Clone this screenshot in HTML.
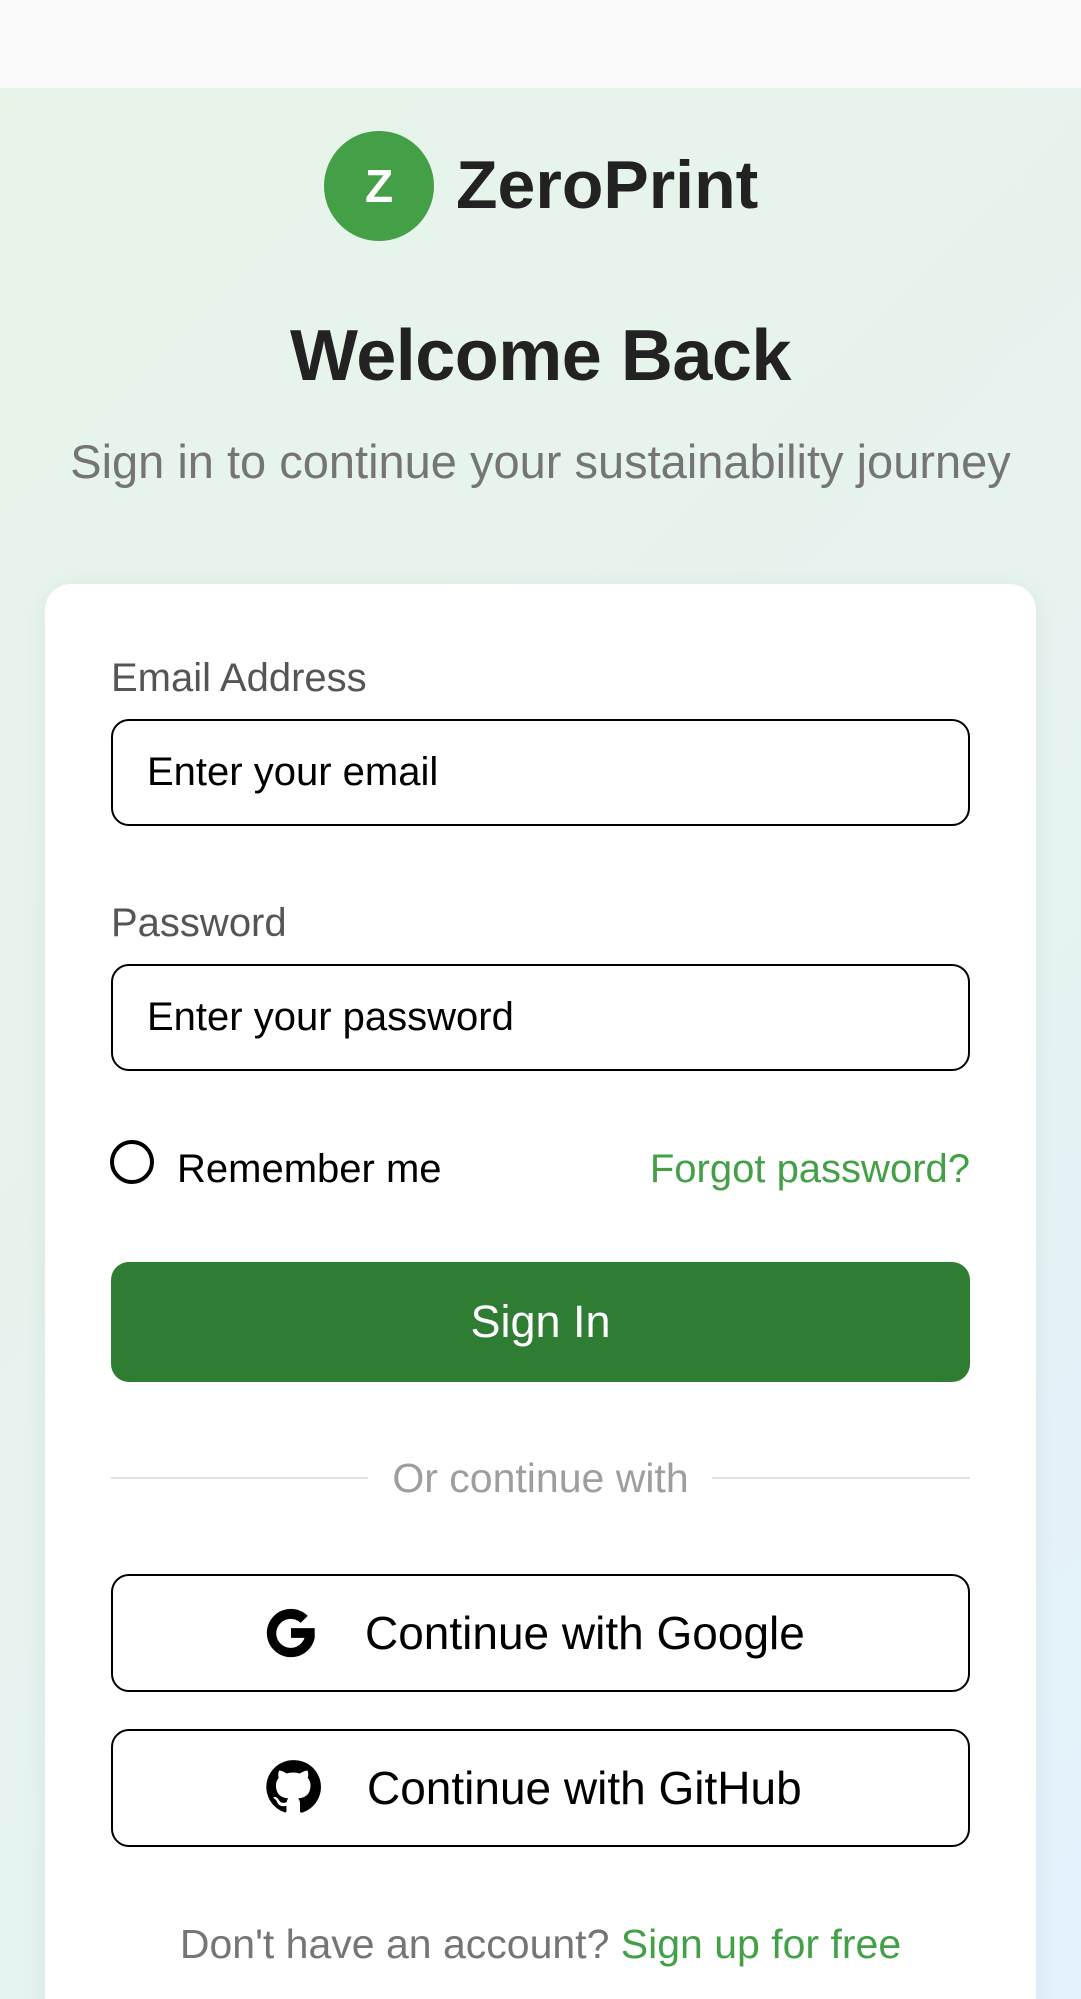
<!DOCTYPE html>
<html><head><meta charset="utf-8"><style>
*{margin:0;padding:0;box-sizing:border-box}
html,body{width:1081px;height:1999px;overflow:hidden;background:#e6f3ee}
body{font-family:"Liberation Sans",sans-serif;position:relative}
.bg{position:absolute;left:0;top:0;width:1081px;height:1999px;background:linear-gradient(135deg,#e8f5e9 0%,#e6f3ee 50%,#e3f2fd 100%)}
.top{position:absolute;left:0;top:0;width:1081px;height:88px;background:#fafafa}
.a{position:absolute;white-space:nowrap}
.logo{left:324px;top:131px;width:110px;height:110px;border-radius:50%;background:#43a047;color:#fff;font-weight:bold;font-size:46px;text-align:center;line-height:110px}
.card{position:absolute;left:45px;top:584px;width:991px;height:1500px;background:#fff;border-radius:26px;box-shadow:0 4px 24px rgba(0,0,0,0.06)}
.inp{position:absolute;left:111px;width:859px;height:107px;border:2px solid #000;border-radius:18px;font-size:40px;line-height:103px;padding-left:34px;color:#000}
.lbl{font-size:40px;color:#555;left:111px}
.btn{position:absolute;left:111px;width:859px;height:118px;border:2px solid #000;border-radius:18px;background:#fff}
</style></head><body>
<div class="bg"></div>
<div class="top"></div>
<div class="a logo">Z</div>
<div class="a" style="left:456px;top:140px;font-size:68px;font-weight:bold;color:#222;line-height:90px">ZeroPrint</div>
<div class="a" style="left:0;width:1081px;text-align:center;top:315px;font-size:72px;font-weight:bold;color:#222;line-height:82px;letter-spacing:-0.5px">Welcome Back</div>
<div class="a" style="left:0;width:1081px;text-align:center;top:432px;font-size:47px;color:#757575;line-height:60px">Sign in to continue your sustainability journey</div>
<div class="card"></div>
<div class="a lbl" style="top:652px;line-height:52px">Email Address</div>
<div class="inp" style="top:719px">Enter your email</div>
<div class="a lbl" style="top:897px;line-height:52px">Password</div>
<div class="inp" style="top:964px">Enter your password</div>
<div class="a" style="left:110px;top:1140px;width:44px;height:44px;border:4px solid #000;border-radius:50%"></div>
<div class="a" style="left:177px;top:1143px;font-size:40px;line-height:52px;color:#000">Remember me</div>
<div class="a" style="right:111px;top:1143px;font-size:40px;line-height:52px;color:#43a047">Forgot password?</div>
<div class="a" style="left:111px;top:1262px;width:859px;height:120px;background:#2e7d32;border-radius:18px;color:#fff;font-size:45px;text-align:center;line-height:120px">Sign In</div>
<div class="a" style="left:111px;top:1477px;width:257px;height:2px;background:#e0e0e0"></div>
<div class="a" style="left:712px;top:1477px;width:258px;height:2px;background:#e0e0e0"></div>
<div class="a" style="left:0;width:1081px;text-align:center;top:1452px;font-size:41px;line-height:52px;color:#9e9e9e">Or continue with</div>
<div class="btn" style="top:1574px"></div>
<svg class="a" style="left:262px;top:1604px" width="58" height="58" viewBox="0 0 24 24"><path fill="#000" d="M12 2a10 10 0 1 0 9.8 12V10H12v4h5.6A6 6 0 1 1 16 7.8l2.9-2.9A10 10 0 0 0 12 2z"/></svg>
<div class="a" style="left:365px;top:1607px;font-size:46px;line-height:52px;color:#000">Continue with Google</div>
<div class="btn" style="top:1729px"></div>
<svg class="a" style="left:265px;top:1759px" width="56" height="56" viewBox="0 0 24 24"><path fill="#000" d="M12 .5A11.5 11.5 0 0 0 8.4 22.9c.6.1.8-.3.8-.6v-2.2c-3.2.7-3.9-1.4-3.900-1.4-.5-1.3-1.3-1.7-1.3-1.700-1-.7.1-.7.1-.7 1.2.1 1.8 1.2 1.8 1.2 1 1.8 2.7 1.3 3.4 1 .1-.8.4-1.3.7-1.6-2.6-.3-5.3-1.3-5.3-5.7 0-1.3.5-2.3 1.2-3.1-.1-.3-.5-1.5.1-3.1 0 0 1-.3 3.2 1.2a11 11 0 0 1 5.8 0c2.2-1.5 3.2-1.2 3.2-1.2.6 1.6.2 2.8.1 3.1.8.8 1.2 1.9 1.2 3.1 0 4.4-2.7 5.4-5.300 5.7.4.4.8 1.1.8 2.2v3.3c0 .3.2.7.8.6A11.5 11.5 0 0 0 12 .5z"/></svg>
<div class="a" style="left:367px;top:1762px;font-size:46px;line-height:52px;color:#000">Continue with GitHub</div>
<div class="a" style="left:0;width:1081px;text-align:center;top:1918px;font-size:41px;line-height:52px;color:#757575">Don't have an account? <span style="color:#43a047">Sign up for free</span></div>
</body></html>
